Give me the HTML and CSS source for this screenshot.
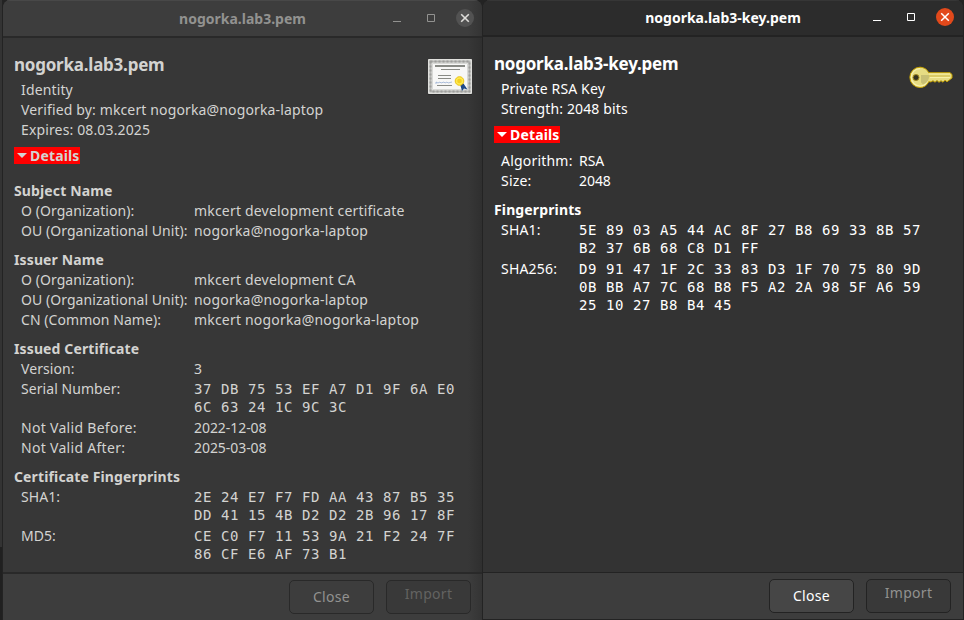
FILE: index.html
```html
<!DOCTYPE html>
<html lang="en">
<head>
<meta charset="utf-8">
<title>nogorka.lab3.pem</title>
<link rel="stylesheet" href="styles.css">
</head>
<body>
<main class="desktop">
  <div class="backdrop" aria-hidden="true"></div>
  <section class="window inactive">
    <header class="titlebar">
      <h1 class="title">nogorka.lab3.pem</h1>
      <div class="controls">
        <span class="control"><svg width="10" height="10" viewBox="0 0 10 10"><path d="M1 8.5h8" /></svg></span>
        <span class="control"><svg width="10" height="10" viewBox="0 0 10 10"><path d="M1.5 1.5h7v7h-7z" /></svg></span>
        <span class="control close"><svg width="10" height="10" viewBox="0 0 10 10"><path d="M1.2 1.2l7.6 7.6M8.8 1.2L1.2 8.8" /></svg></span>
      </div>
    </header>
    <div class="content">
      <div class="summary">
        <div>
          <h2 class="name">nogorka.lab3.pem</h2>
          <p class="line">Identity</p>
          <p class="line">Verified by: mkcert nogorka@nogorka-laptop</p>
          <p class="line">Expires: 08.03.2025</p>
        </div>
        <svg class="certificate" width="46" height="38" viewBox="0 0 46 38">
          <path d="M1 1h44v36H1z" fill="#222" opacity=".6"/>
          <path d="M1.5 1.5h43v34h-43z" fill="#e4e4e2" stroke="#e0e0dd"/>
          <path d="M3.5 3.5h39v30h-39z" fill="none" stroke="#b4b5b2" stroke-width="2"/>
          <path d="M3.5 3.5h39v30h-39z" fill="none" stroke="#9d9e9b" stroke-width="2" stroke-dasharray="2 2"/>
          <path d="M5.5 5.5h35v26h-35z" fill="#f7f7f6" stroke="#d8d9d6"/>
          <path d="M8 8h30" stroke="#888a85" stroke-width="2"/>
          <path d="M14 11.5h19M11 17.500h13M11 20.500h13M10 27.500h15" stroke="#888a85"/>
          <path d="M9 26v-2l2 1 2-1 1 1 3-1 1 1 2-1 1 1 4-1" fill="none" stroke="#8aa4cf" stroke-width=".7"/>
          <path d="M33 26l2 7 2-2.500 3.500 1-4-6z" fill="#204a87"/>
          <circle cx="32.500" cy="23" r="4.300" fill="#fce94f" stroke="#edc210"/>
          <circle cx="32.500" cy="23" r="2.300" fill="#f4cf20"/>
        </svg>
      </div>
      <div class="details"><span class="expander"><i class="arrow"></i>Details</span></div>
      <dl class="fields">
        <h3 class="group">Subject Name</h3>
        <dt>O (Organization):</dt><dd>mkcert development certificate</dd>
        <dt>OU (Organizational Unit):</dt><dd>nogorka@nogorka-laptop</dd>
        <h3 class="group">Issuer Name</h3>
        <dt>O (Organization):</dt><dd>mkcert development CA</dd>
        <dt>OU (Organizational Unit):</dt><dd>nogorka@nogorka-laptop</dd>
        <dt>CN (Common Name):</dt><dd>mkcert nogorka@nogorka-laptop</dd>
        <h3 class="group">Issued Certificate</h3>
        <dt>Version:</dt><dd>3</dd>
        <dt>Serial Number:</dt><dd class="hex">37 DB 75 53 EF A7 D1 9F 6A E0<br>6C 63 24 1C 9C 3C</dd>
        <dt class="valid">Not Valid Before:</dt><dd class="date">2022-12-08</dd>
        <dt class="valid">Not Valid After:</dt><dd class="date">2025-03-08</dd>
        <h3 class="group">Certificate Fingerprints</h3>
        <dt>SHA1:</dt><dd class="hex">2E 24 E7 F7 FD AA 43 87 B5 35<br>DD 41 15 4B D2 D2 2B 96 17 8F</dd>
        <dt>MD5:</dt><dd class="hex">CE C0 F7 11 53 9A 21 F2 24 7F<br>86 CF E6 AF 73 B1</dd>
      </dl>
    </div>
    <footer class="actions">
      <button class="button">Close</button>
      <button class="button disabled">Import</button>
    </footer>
  </section>

  <section class="window active">
    <header class="titlebar">
      <h1 class="title">nogorka.lab3-key.pem</h1>
      <div class="controls">
        <span class="control"><svg width="10" height="10" viewBox="0 0 10 10"><path d="M1 8.5h8" /></svg></span>
        <span class="control"><svg width="10" height="10" viewBox="0 0 10 10"><path d="M1.5 1.5h7v7h-7z" /></svg></span>
        <span class="control close"><svg width="10" height="10" viewBox="0 0 10 10"><path d="M1.2 1.2l7.6 7.6M8.8 1.2L1.2 8.8" /></svg></span>
      </div>
    </header>
    <div class="content">
      <div class="summary">
        <div>
          <h2 class="name">nogorka.lab3-key.pem</h2>
          <p class="line">Private RSA Key</p>
          <p class="line">Strength: 2048 bits</p>
        </div>
        <svg class="key" width="44" height="23" viewBox="0 0 44 23">
          <path d="M11 1.2a10 10 0 1 0 0 20.300c4 0 7.200-2.300 8.700-5.800l2.300.2 2-1.200 2 1.500 2-1.700 2 1.800 2-1.600 2 1.500 2-2 2 1.500 5-3.700V8.500l-2-1.800H19.700C18.200 3.500 15 1.200 11 1.200z" fill="#e6dc83" stroke="#c4a000"/>
          <path d="M11 2.600a8.600 8.600 0 1 0 0 17.400c3.600 0 6.400-2.100 7.600-5.300" fill="none" stroke="#f8f1ae" stroke-width="1.2"/>
          <path d="M12 9h8c.5 4-1.500 8-6 9.500l-2-2z" fill="#c8c074"/>
          <path d="M20 8h21M21 11.500h20" stroke="#f8f1a5"/>
          <path d="M20 10h21" stroke="#d0bb48"/>
          <circle cx="7" cy="11.500" r="3" fill="#33311f" stroke="#a48c20"/>
        </svg>
      </div>
      <div class="details"><span class="expander"><i class="arrow"></i>Details</span></div>
      <dl class="fields">
        <dt>Algorithm:</dt><dd class="date">RSA</dd>
        <dt>Size:</dt><dd class="date">2048</dd>
        <h3 class="group">Fingerprints</h3>
        <dt>SHA1:</dt><dd class="hex">5E 89 03 A5 44 AC 8F 27 B8 69 33 8B 57<br>B2 37 6B 68 C8 D1 FF</dd>
        <dt>SHA256:</dt><dd class="hex">D9 91 47 1F 2C 33 83 D3 1F 70 75 80 9D<br>0B BB A7 7C 68 B8 F5 A2 2A 98 5F A6 59<br>25 10 27 B8 B4 45</dd>
      </dl>
    </div>
    <footer class="actions">
      <button class="button">Close</button>
      <button class="button disabled">Import</button>
    </footer>
  </section>
</main>
</body>
</html>
```
FILE: styles.css
```css
* { box-sizing: border-box; margin: 0; padding: 0; }
body {
  width: 964px;
  height: 620px;
  overflow: hidden;
  background: #232323;
  font: 14px/17px "Noto Sans", sans-serif;
}
.desktop { display: flex; height: 620px; }
.backdrop {
  width: 2px;
  background: linear-gradient(#333 0 547px, #202020 547px);
}
.window {
  display: flex;
  flex-direction: column;
  flex: none;
  height: 620px;
  border: 1px solid #232323;
  border-top: 0;
  border-radius: 8px 8px 0 0;
  overflow: hidden;
}
.inactive {
  width: 480px;
  color: #d3d3d1;
  background: linear-gradient(to left, #2f2f2f, #373737 14px);
  border-bottom: 0;
  border-right: 0;
}
.active { width: 482px; color: #fff; background: #333; }
.titlebar {
  display: grid;
  grid-template-columns: 1fr auto;
  flex: none;
  height: 38px;
  background: linear-gradient(to left, #343434, #3d3d3d 14px);
  border-bottom: 2px solid #292929;
  box-shadow: inset 0 1px #484848;
}
.active .titlebar { height: 37px; background: #2c2c2c; border-color: #232323; box-shadow: inset 0 1px #363636; }
.title {
  grid-area: 1 / 1 / 2 / 3;
  align-self: center;
  text-align: center;
  font-size: 14px;
  line-height: 20px;
}
.inactive .title { color: #929290; padding-top: 1px; }
.controls {
  grid-area: 1 / 2;
  display: flex;
  align-items: center;
  gap: 16px;
  padding-right: 8px;
}
.active .controls { padding: 0 9px 1px 0; }
.control { display: grid; place-items: center; width: 18px; height: 18px; }
.control svg { fill: none; stroke: #929290; }
.active .control svg { stroke: #fff; }
.close { background: #525252; border-radius: 50%; }
.inactive .close svg { stroke: #deddda; stroke-width: 1.6; }
.active .close { background: #e2491b; }
.active .close svg { stroke-width: 1.5; }
.content { flex: 1; padding: 14px 11px 0; }
.summary { display: flex; justify-content: space-between; }
.name { font-size: 17px; line-height: 24px; padding-top: 1px; margin-bottom: 4px; letter-spacing: -.23px; }
.line { padding-left: 7px; margin-bottom: 3px; letter-spacing: .14px; }
.certificate { margin: 6px -2px 0 0; }
.key { margin: 15px -1px 0 0; }
.details { margin-top: 3px; height: 17px; }
.expander {
  display: inline-flex;
  align-items: center;
  width: 66px;
  height: 17px;
  padding-left: 3px;
  background: #f00;
  font-weight: 700;
  letter-spacing: .15px;
}
.arrow {
  width: 10px;
  height: 5px;
  margin-right: 3px;
  background: currentColor;
  clip-path: polygon(0 0, 100% 0, 50% 100%);
}
.fields {
  display: grid;
  grid-template-columns: 180px 1fr;
  row-gap: 3px;
  margin-top: 12px;
}
.active .fields { grid-template-columns: 85px 1fr; }
.fields dt { padding-left: 7px; white-space: nowrap; letter-spacing: .06px; }
.fields dt.valid { letter-spacing: .3px; }
.active .fields dt { letter-spacing: .2px; }
.fields dd { letter-spacing: .19px; }
.fields .date { letter-spacing: -.06px; }
.fields .hex { font: 14px/18px "DejaVu Sans Mono", monospace; letter-spacing: .571px; white-space: nowrap; }
.group { grid-column: 1 / 3; margin-top: 9px; font-size: 14px; line-height: 17px; letter-spacing: .13px; }
.actions {
  flex: none;
  display: flex;
  justify-content: flex-end;
  gap: 12px;
  height: 48px;
  padding: 6px 11px 0;
  background: linear-gradient(to left, #343434, #3d3d3d 14px);
  border-top: 2px solid #292929;
}
.active .actions { height: 47px; border-top: 1px solid #232323; padding-right: 12px; background: #3d3d3d; }
.button {
  width: 85px;
  height: 34px;
  color: #929290;
  background: #3d3d3d;
  border: 1px solid #292929;
  border-radius: 5px;
  font: 14px/20px "Noto Sans", sans-serif;
  letter-spacing: .3px;
}
.active .button { color: #fff; background: #464646; border-color: #232323; }
.button.disabled { color: #636361; padding-bottom: 6px; background: #393939; }
.active .button.disabled { color: #929290; background: #393939; }
```
